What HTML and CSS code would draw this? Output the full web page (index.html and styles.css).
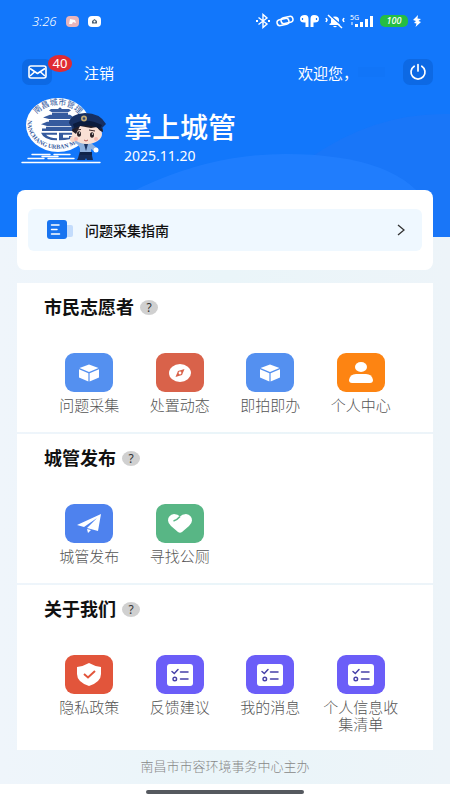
FILE: index.html
```html
<!DOCTYPE html>
<html lang="zh-CN">
<head>
    <meta charset="UTF-8">
    <meta name="viewport" content="width=device-width, initial-scale=1">
    <title>掌上城管</title>
    <link rel="stylesheet" href="styles.css">
</head>
<body>
    <!-- shared shapes -->
    <svg class="sprite" aria-hidden="true">
        <symbol id="cube" viewBox="0 0 24 20">
            <path d="M12 1.5 21.5 5 12 9 2.5 5z"/>
            <path d="M2 6.3 11.4 10.2V18.5L2 14.6z"/>
            <path d="M22 6.3 12.6 10.2V18.5L22 14.6z"/>
        </symbol>
        <symbol id="list" viewBox="0 0 26 22">
            <rect width="26" height="22" rx="3"/>
            <path d="M5 7.5 7.3 9.5 11 5.5M13.5 8H21M13.5 15H21" fill="none" stroke="#453fa8" stroke-width="1.5" stroke-linecap="round"/>
            <circle cx="7.8" cy="15" r="1.8" fill="none" stroke="#453fa8" stroke-width="1.4"/>
        </symbol>
    </svg>

    <header class="hero">
        <svg class="waves" viewBox="0 0 450 237" preserveAspectRatio="none" aria-hidden="true">
            <path d="M310 237V158Q375 112 450 114V237z" fill="#1c76f8" fill-opacity=".8"/>
            <path d="M60 237Q170 154 285 154T430 208V237z" fill="#2480ff" fill-opacity=".7"/>
        </svg>

        <div class="status">
            <div class="status_left">
                <span class="time">3:26</span>
                <svg width="13" height="11" viewBox="0 0 13 11"><rect width="13" height="11" rx="4" fill="#e9b5bb"/><path d="M3 8 4 3 9 4 10 7 7 6 6 8z" fill="#fff"/></svg>
                <svg width="13" height="11" viewBox="0 0 13 11"><rect width="13" height="11" rx="4" fill="#fff"/><path d="M4 5 6.5 3 9 5V7.5H4z" fill="#4d6173"/><circle cx="6.5" cy="5.5" r="1" fill="#fff"/></svg>
            </div>
            <div class="status_right">
                <svg width="16" height="16" viewBox="0 0 16 16" fill="none" stroke="#fff" stroke-width="1.4"><path d="M3.5 4.5 12 11 8 14.5V1.5L12 5 3.5 11.5"/><path d="M1 8h2M13 8h2" stroke-width="2"/></svg>
                <svg width="18" height="14" viewBox="0 0 18 14" fill="none" stroke="#fff" stroke-width="1.5"><rect x="1" y="5" width="12" height="6" rx="3" transform="rotate(-12 7 8)"/><rect x="5" y="3" width="12" height="6" rx="3" transform="rotate(-12 11 6)"/></svg>
                <svg width="21" height="14" viewBox="0 0 21 14" fill="#fff"><path d="M9.500 13H6.500V8.500Q1 9 1 5T6 1Q9.500 1 9.500 5z"/><path d="M11.500 13h3V8.500Q20 9 20 5T15 1Q11.500 1 11.500 5z"/><path d="M3.500 4v2M17.500 4v2" stroke="#1277fb" stroke-width="1.2"/></svg>
                <svg width="20" height="15" viewBox="0 0 20 15"><path d="M4.500 11V10L6 9V6Q6 2.500 10 2.500T14 6V9L15.500 10V11zM8 12h4Q10 14.500 8 12z" fill="#fff"/><path d="M1 4 2 6 1 8M19 4 18 6 19 8" fill="none" stroke="#fff" stroke-width="1.6"/><path d="M4.500 1 17.500 12" stroke="#1277fb" stroke-width="1.500"/><path d="M3 1 17 14" stroke="#fff" stroke-width="1.5"/></svg>
                <svg width="25" height="16" viewBox="0 0 25 16" fill="#fff"><text x="0" y="7" class="net">5G</text><rect x="1" y="9" width="2" height="3" opacity=".5"/><rect x="5" y="11" width="3" height="3"/><rect x="10" y="9" width="3" height="5"/><rect x="15" y="6" width="3" height="8"/><rect x="20" y="3" width="3" height="11"/></svg>
                <span class="battery">100</span>
                <svg width="8" height="12" viewBox="0 0 8 12" fill="#fff"><path d="M5 0 0 5 3 6 1 8 3.500 8.500 2.500 12 8 7 5.500 6 8 4 4.500 3.500z"/></svg>
            </div>
        </div>

        <div class="topbar">
            <button class="icon_btn mail_btn" aria-label="消息">
                <svg width="19" height="14" viewBox="0 0 19 14" fill="none" stroke="#fff" stroke-width="1.6" stroke-linejoin="round"><rect x="1" y="1" width="17" height="12" rx="2"/><path d="M2 3.500 9.500 8.500 17 3.500M2 11 6.500 7M17 11 12.500 7"/></svg>
                <span class="badge">40</span>
            </button>
            <a class="logout" href="#">注销</a>
            <span class="welcome">欢迎您，</span>
            <span class="user_name"></span>
            <button class="icon_btn" aria-label="退出">
                <svg width="18" height="18" viewBox="0 0 18 18" fill="none" stroke="#fff" stroke-width="1.7" stroke-linecap="round"><path d="M5.200 3.200A7 7 0 1 0 12.800 3.200M9 1.500V8"/></svg>
            </button>
        </div>

        <div class="brand">
            <svg class="logo" width="88" height="72" viewBox="0 0 88 72">
                <defs>
                    <path id="arc_top" d="M13 31A25 20 0 0 1 63 31"/>
                    <path id="arc_bottom" d="M8 26A30 25 0 0 0 66 38"/>
                </defs>
                <ellipse cx="38" cy="31" rx="32" ry="27" fill="#fff"/>
                <g fill="#355a9e">
                    <text class="logo_cn" text-anchor="middle"><textPath href="#arc_top" startOffset="50%">南昌城市管理</textPath></text>
                    <text class="logo_en"><textPath href="#arc_bottom">NANCHANG URBAN MA</textPath></text>
                    <g transform="translate(1 3) scale(1 .85)">
                        <path d="M39 12 41 14H48L50 16 47 18H31L28 16 30 14H37z"/>
                        <path d="M31 18.500H47V21H31zM29 21H49L53 24 49 26H28L22 24z"/>
                        <path d="M28 27H50V29H28zM26 29H52L55 32 51 34H26L20 32z"/>
                        <path d="M25 35H52V37H25zM21 37H55V40H21z"/>
                        <path d="M20 42H36V44.500H25Q28 48.500 36 48.500V51Q23 51 20 42zM38 42H54V44.500H42V48H48V46H54Q51 51 38 51z"/>
                    </g>
                </g>
                <g stroke="#fff" stroke-width="1.4" stroke-linecap="round">
                    <path d="M2 68.500H80M12 60.500H30M34 60.500H50M8 64.500H24M28 64.500H54M22 62.500H38"/>
                </g>
                <path d="M60 57 58 64 57 66H65L66 64 67 66H73L71 57z" fill="#152c59"/>
                <path d="M58 51 52 45 54 43 61 49H71L77 54 74 57 71 55V60H60V54z" fill="#8fb1df"/>
                <path d="M64 50 66 57 68 50z" fill="#203663"/>
                <path d="M60 58H72V61H60z" fill="#10244b"/>
                <circle cx="53" cy="45" r="3" fill="#f8d7c8"/>
                <circle cx="76" cy="56" r="2.500" fill="#fff"/>
                <ellipse cx="67" cy="40" rx="15" ry="10" fill="#fae0d5"/>
                <path d="M52 37Q53 27 68 27T83 38Q79 37 77 33L71 34 60 32 56 40z" fill="#211d29"/>
                <ellipse cx="59" cy="40" rx="2" ry="2.800" fill="#2b2025"/>
                <ellipse cx="72" cy="41" rx="2" ry="2.800" fill="#2b2025"/>
                <circle cx="59.500" cy="39" r=".7" fill="#fff"/><circle cx="72.500" cy="40" r=".7" fill="#fff"/>
                <path d="M56 36 61 35.500M69 36 75 37" stroke="#3a2528" stroke-width="1"/>
                <circle cx="56" cy="45" r="2" fill="#f5b9b0"/><circle cx="76" cy="45" r="2" fill="#f5b9b0"/>
                <path d="M64 46Q66 48 68 46" fill="none" stroke="#bc5550" stroke-width="1"/>
                <path d="M49 29Q50 20 65 19 80 19 86 30L81 35Q66 27 53 35z" fill="#172f61"/>
                <path d="M53 30Q66 23 82 31L80 35Q66 28 54 34z" fill="#0b1b3d"/>
                <circle cx="64" cy="24.500" r="3" fill="#c3ab75"/><circle cx="64" cy="24.500" r="1.300" fill="#304470"/>
            </svg>
            <div class="brand_text">
                <h1>掌上城管</h1>
                <p>2025.11.20</p>
            </div>
        </div>
    </header>

    <main>
        <div class="guide_card">
            <a class="guide" href="#">
                <svg width="27" height="20" viewBox="0 0 27 20">
                    <rect x="17" y="5" width="9" height="12" rx="2" fill="#c3dcfc"/>
                    <rect width="20" height="19" rx="3" fill="#1874f0"/>
                    <path d="M4.500 5H12M4.500 9.500H10M4.500 14H12.500" stroke="#fff" stroke-width="1.500" stroke-linecap="round"/>
                </svg>
                <span>问题采集指南</span>
                <svg class="arrow" width="8" height="12" viewBox="0 0 8 12" fill="none" stroke="#333" stroke-width="1.300"><path d="M1 1 7 6 1 11"/></svg>
            </a>
        </div>

        <section class="panel">
            <div class="panel_head"><h2>市民志愿者</h2><button class="help">?</button></div>
            <div class="grid">
                <a class="item" href="#"><span class="tile blue"><svg width="24" height="20"><use href="#cube"/></svg></span><span class="label">问题采集</span></a>
                <a class="item" href="#"><span class="tile red"><svg width="22" height="18" viewBox="0 0 22 18"><ellipse cx="11" cy="9" rx="11" ry="9"/><path d="M15.500 5 13 11 6.500 13 9 7z" fill="#d9624a"/><circle cx="11" cy="9" r="1.400"/></svg></span><span class="label">处置动态</span></a>
                <a class="item" href="#"><span class="tile blue"><svg width="24" height="20"><use href="#cube"/></svg></span><span class="label">即拍即办</span></a>
                <a class="item" href="#"><span class="tile orange"><svg width="24" height="21" viewBox="0 0 24 21"><ellipse cx="12" cy="5" rx="6" ry="5"/><path d="M0 18Q1 12 7 12H17Q23 12 24 18 24 21 21 21H3Q0 21 0 18z"/></svg></span><span class="label">个人中心</span></a>
            </div>
        </section>

        <section class="panel">
            <div class="panel_head"><h2>城管发布</h2><button class="help">?</button></div>
            <div class="grid">
                <a class="item" href="#"><span class="tile royal"><svg width="24" height="19" viewBox="0 0 24 19"><path d="M24 0 0 11 7 13 20 4 10 14 21 17z"/><path d="M10 15 14 16 11 19z"/></svg></span><span class="label">城管发布</span></a>
                <a class="item" href="#"><span class="tile green"><svg width="24" height="19" viewBox="0 0 24 19"><path d="M12 2.500Q14 0 18 0 24 1 24 6.500 24 9 21 12L14 18Q12 19.500 10 18L3 12Q0 9 0 6.500 0 1 6 0 10 0 12 2.500z"/><path d="M5.500 7Q9 6 12 2.500" fill="none" stroke="#58b685" stroke-width="1.500"/></svg></span><span class="label">寻找公厕</span></a>
            </div>
        </section>

        <section class="panel last">
            <div class="panel_head"><h2>关于我们</h2><button class="help">?</button></div>
            <div class="grid">
                <a class="item" href="#"><span class="tile brick"><svg width="24" height="23" viewBox="0 0 24 23"><path d="M12 0Q17 3 24 4V11Q24 19 12 23 0 19 0 11V4Q7 3 12 0z"/><path d="M7 11 11 14.500 18 8" fill="none" stroke="#e2553b" stroke-width="2"/></svg></span><span class="label">隐私政策</span></a>
                <a class="item" href="#"><span class="tile purple"><svg width="26" height="22"><use href="#list"/></svg></span><span class="label">反馈建议</span></a>
                <a class="item" href="#"><span class="tile purple"><svg width="26" height="22"><use href="#list"/></svg></span><span class="label">我的消息</span></a>
                <a class="item" href="#"><span class="tile purple"><svg width="26" height="22"><use href="#list"/></svg></span><span class="label">个人信息收集清单</span></a>
            </div>
        </section>

        <footer>南昌市市容环境事务中心主办</footer>
    </main>

    <div class="home_bar"><span></span></div>
</body>
</html>
```

FILE: styles.css
```css
*{
    box-sizing:border-box;
}

body{
    margin:0;
    background-color:white;
    color:#111;
    font-family:"Noto Sans", "Noto Sans CJK SC", sans-serif;
    font-size:15px;
}

a{
    color:inherit;
    text-decoration:none;
}

button{
    border:none;
    padding:0;
    font-family:inherit;
}

h1, h2, p{
    margin:0;
}

svg{
    display:block;
    flex-shrink:0;
}

.sprite{
    display:none;
}

/* blue header */
.hero{
    position:relative;
    padding-bottom:71px;
    background-color:#1277fb;
    color:white;
}

.waves{
    position:absolute;
    left:0;
    top:0;
    width:100%;
    height:100%;
}

.status, .topbar, .brand{
    position:relative;
    display:flex;
    align-items:center;
}

.status{
    justify-content:space-between;
    height:42px;
    padding:0 29px 0 32px;
}

.status_left{
    display:flex;
    align-items:center;
    gap:9px;
}

.status_right{
    display:flex;
    align-items:center;
    gap:5px;
}

.time{
    font-size:13px;
    font-style:italic;
    font-weight:300;
}

.net{
    font-size:7px;
}

.battery{
    width:28px;
    height:12px;
    border-radius:5px;
    background-color:#25bd43;
    font-size:9px;
    font-style:italic;
    font-weight:500;
    line-height:12px;
    text-align:center;
}

.topbar{
    height:26px;
    margin-top:17px;
    padding:0 17px 0 22px;
}

.icon_btn{
    position:relative;
    display:flex;
    align-items:center;
    justify-content:center;
    width:30px;
    height:26px;
    border-radius:7px;
    background-color:#0d69e4;
}

.badge{
    position:absolute;
    left:26px;
    top:-4px;
    width:24px;
    height:17px;
    border-radius:12px / 9px;
    background-color:#df2b33;
    color:white;
    font-size:13px;
    line-height:17px;
    text-align:center;
}

.logout{
    margin-left:32px;
}

.welcome{
    margin-left:auto;
}

.user_name{
    width:27px;
    height:10px;
    margin-right:18px;
    background-color:#1175f8;
}

.brand{
    align-items:flex-start;
    gap:16px;
    padding:9px 20px 0;
}

.brand_text{
    padding-top:14px;
}

.brand_text h1{
    font-size:28px;
    font-weight:500;
    line-height:38px;
}

.brand_text p{
    font-size:14px;
    line-height:20px;
}

.logo_cn{
    font-size:8px;
}

.logo_en{
    font-family:"Liberation Serif", serif;
    font-size:6px;
    font-weight:bold;
}

/* cards */
main{
    padding:0 17px;
    background:linear-gradient(to right, #eff5fb, #eaf5f9 50%, #edf4f9);
}

.guide_card{
    position:relative;
    top:-47px;
    margin-bottom:-34px;
    padding:19px 11px;
    border-radius:8px;
    background-color:white;
}

.guide{
    display:flex;
    align-items:center;
    gap:11px;
    height:42px;
    padding:0 17px 0 19px;
    border-radius:6px;
    background-color:#eff8ff;
    font-size:14px;
    font-weight:500;
}

.arrow{
    margin-left:auto;
}

.panel{
    min-height:149px;
    margin-bottom:2px;
    padding:12px 27px 8px;
    background-color:white;
}

.last{
    padding-bottom:17px;
}

.panel_head{
    display:flex;
    align-items:center;
    gap:6px;
    height:24px;
}

.panel_head h2{
    font-size:18px;
    font-weight:bold;
    line-height:24px;
}

.help{
    width:18px;
    height:15px;
    border-radius:50%;
    background-color:#d0d0d0;
    color:#333;
    font-size:12px;
    line-height:15px;
}

.grid{
    display:grid;
    grid-template-columns:repeat(4, 1fr);
    margin-top:34px;
}

.item{
    display:flex;
    flex-direction:column;
    align-items:center;
    gap:5px;
}

.tile{
    display:flex;
    align-items:center;
    justify-content:center;
    width:48px;
    height:39px;
    border-radius:9px;
    fill:white;
}

.label{
    width:80px;
    color:#555;
    font-weight:300;
    line-height:17px;
    text-align:center;
}

.blue{
    background-color:#5490f0;
}
.red{
    background-color:#d9624a;
}
.orange{
    background-color:#fd8412;
}
.royal{
    background-color:#4e82ee;
}
.green{
    background-color:#58b685;
}
.brick{
    background-color:#e2553b;
}
.purple{
    background-color:#6b5df8;
}

footer{
    height:32px;
    color:#888;
    font-size:13px;
    font-weight:300;
    line-height:28px;
    text-align:center;
}

.home_bar{
    display:flex;
    justify-content:center;
    padding:6px 0;
}

.home_bar span{
    width:35%;
    height:4px;
    border-radius:2px;
    background-color:#55595f;
}
```
